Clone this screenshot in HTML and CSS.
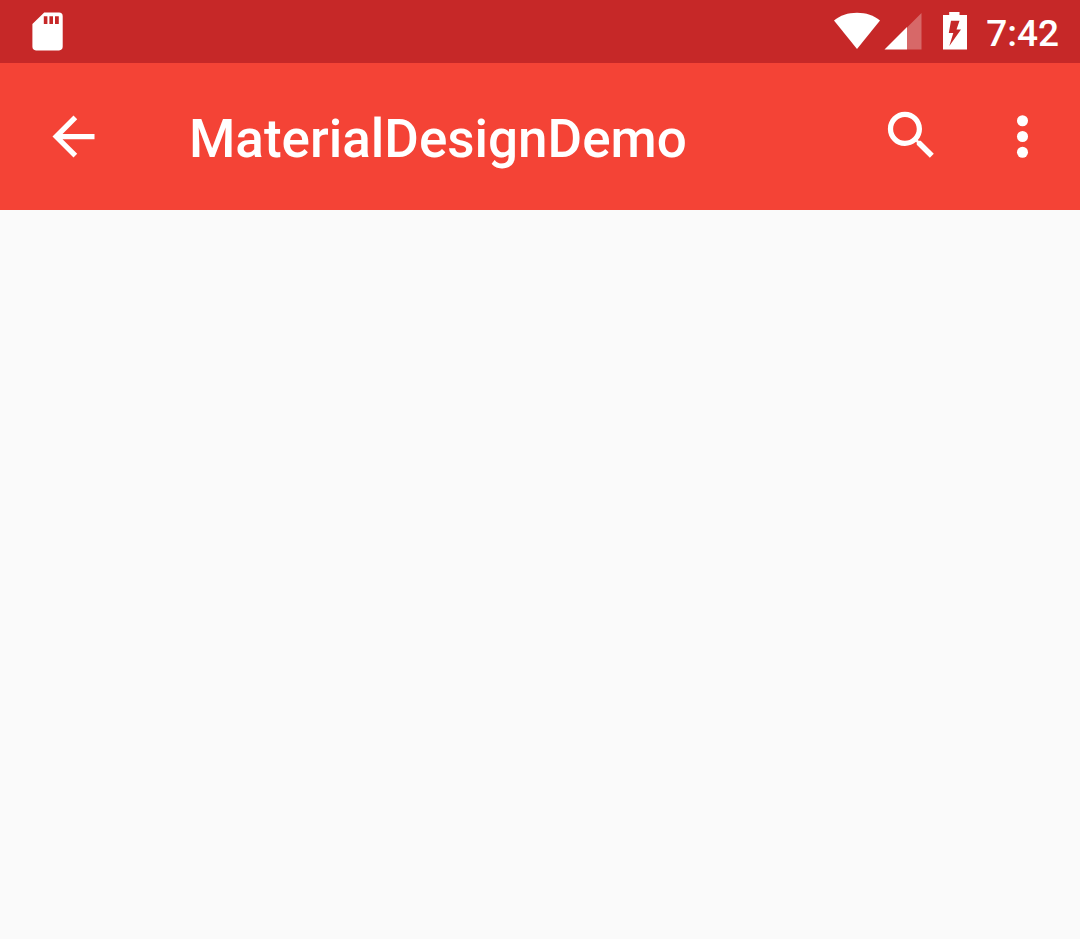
FILE: index.html
```html
<!DOCTYPE html>
<html lang="en">
<head>
<meta charset="utf-8">
<meta name="viewport" content="width=device-width, initial-scale=1">
<title>MaterialDesignDemo</title>
<link rel="stylesheet" href="styles.css">
</head>
<body>
<div class="status-bar">
  <svg class="sd-icon" viewBox="0 0 32 40" aria-hidden="true">
    <path fill-rule="evenodd" d="M12.2 1.5H27Q30.7 1.5 30.7 5.2V35.6Q30.7 39.4 27 39.4H4Q.4 39.4 .4 35.6V13ZM11.8 5.200V13H15.400V5.200ZM17.400 5.200V13H21V5.200ZM23 5.200V13H26.800V5.200Z"/>
  </svg>
  <div class="status-end">
    <svg class="wifi-icon" viewBox="0 0 48 40" aria-hidden="true">
      <path d="M24 38 1 9.500C7 4.500 15 1.800 24 1.800S41 4.500 47 9.500Z"/>
    </svg>
    <svg class="cell-icon" viewBox="0 0 40 40" aria-hidden="true">
      <path class="dim" d="M38.500 2V38.500H24V16.500Z"/>
      <path d="M24 16V38.500H1.500Z"/>
    </svg>
    <svg class="battery-icon" viewBox="0 0 28 40" aria-hidden="true">
      <path fill-rule="evenodd" d="M8.200 1H18.500V4H26V38.500H2V4H8.200ZM10 9.800 7.800 22H12.300L8.300 35 20 18.500H15.500L18.500 9.800Z"/>
    </svg>
    <time class="clock">7:42</time>
  </div>
</div>
<header class="app-bar">
  <button class="icon-button" type="button" aria-label="Navigate up">
    <svg viewBox="0 0 24 24" aria-hidden="true"><path d="M20 11H7.830l5.590-5.590L12 4l-8 8 8 8 1.410-1.410L7.830 13H20z"/></svg>
  </button>
  <h1 class="title">MaterialDesignDemo</h1>
  <div class="actions">
    <button class="icon-button" type="button" aria-label="Search">
      <svg viewBox="0 0.4 24 24" aria-hidden="true"><path d="M15.500 14h-.79l-.28-.27C15.410 12.590 16 11.110 16 9.500 16 5.910 13.090 3 9.500 3S3 5.910 3 9.500 5.910 16 9.500 16c1.610 0 3.090-.59 4.230-1.570l.27.28v.79l5 4.990L20.490 19zM9.500 14C7.010 14 5 11.990 5 9.500S7.010 5 9.500 5 14 7.010 14 9.500 11.990 14 9.500 14z"/></svg>
    </button>
    <button class="icon-button" type="button" aria-label="More options">
      <svg viewBox="0 0 24 24" aria-hidden="true"><circle cx="12" cy="6" r="2.100"/><circle cx="12" cy="12" r="2.100"/><circle cx="12" cy="18" r="2.100"/></svg>
    </button>
  </div>
</header>
<main class="content"></main>
</body>
</html>
```
FILE: styles.css
```css
* {
  box-sizing: border-box;
}

body {
  margin: 0;
  min-height: 100vh;
  display: flex;
  flex-direction: column;
  background: #fafafa;
  color: #fff;
  font-family: Roboto, "Liberation Sans", sans-serif;
  font-weight: 500;
}

svg {
  display: block;
  fill: currentColor;
}

.status-bar {
  height: 63px;
  padding: 0 21px 2px 32px;
  display: flex;
  align-items: center;
  justify-content: space-between;
  background: #c62828;
}

.status-end {
  display: flex;
  align-items: center;
}

.sd-icon {
  width: 32px;
  height: 40px;
}

.wifi-icon {
  width: 48px;
  height: 40px;
}

.cell-icon {
  width: 40px;
  height: 40px;
  margin-left: 2px;
}

.battery-icon {
  width: 28px;
  height: 40px;
  margin-left: 18px;
}

.dim {
  opacity: 0.3;
}

.clock {
  margin-left: 17px;
  padding-top: 6px;
  font-size: 37px;
  line-height: 44px;
}

.app-bar {
  height: 147px;
  padding: 0 26px 0 42px;
  display: flex;
  align-items: center;
  background: #f44336;
}

.title {
  flex: 1;
  margin: 0 0 0 84px;
  padding-top: 4px;
  font-size: 53px;
  font-weight: 500;
  line-height: 64px;
}

.actions {
  display: flex;
  gap: 48px;
}

.icon-button {
  width: 63px;
  height: 63px;
  padding: 0;
  border: 0;
  background: none;
  color: inherit;
}

.content {
  flex: 1;
}
```
